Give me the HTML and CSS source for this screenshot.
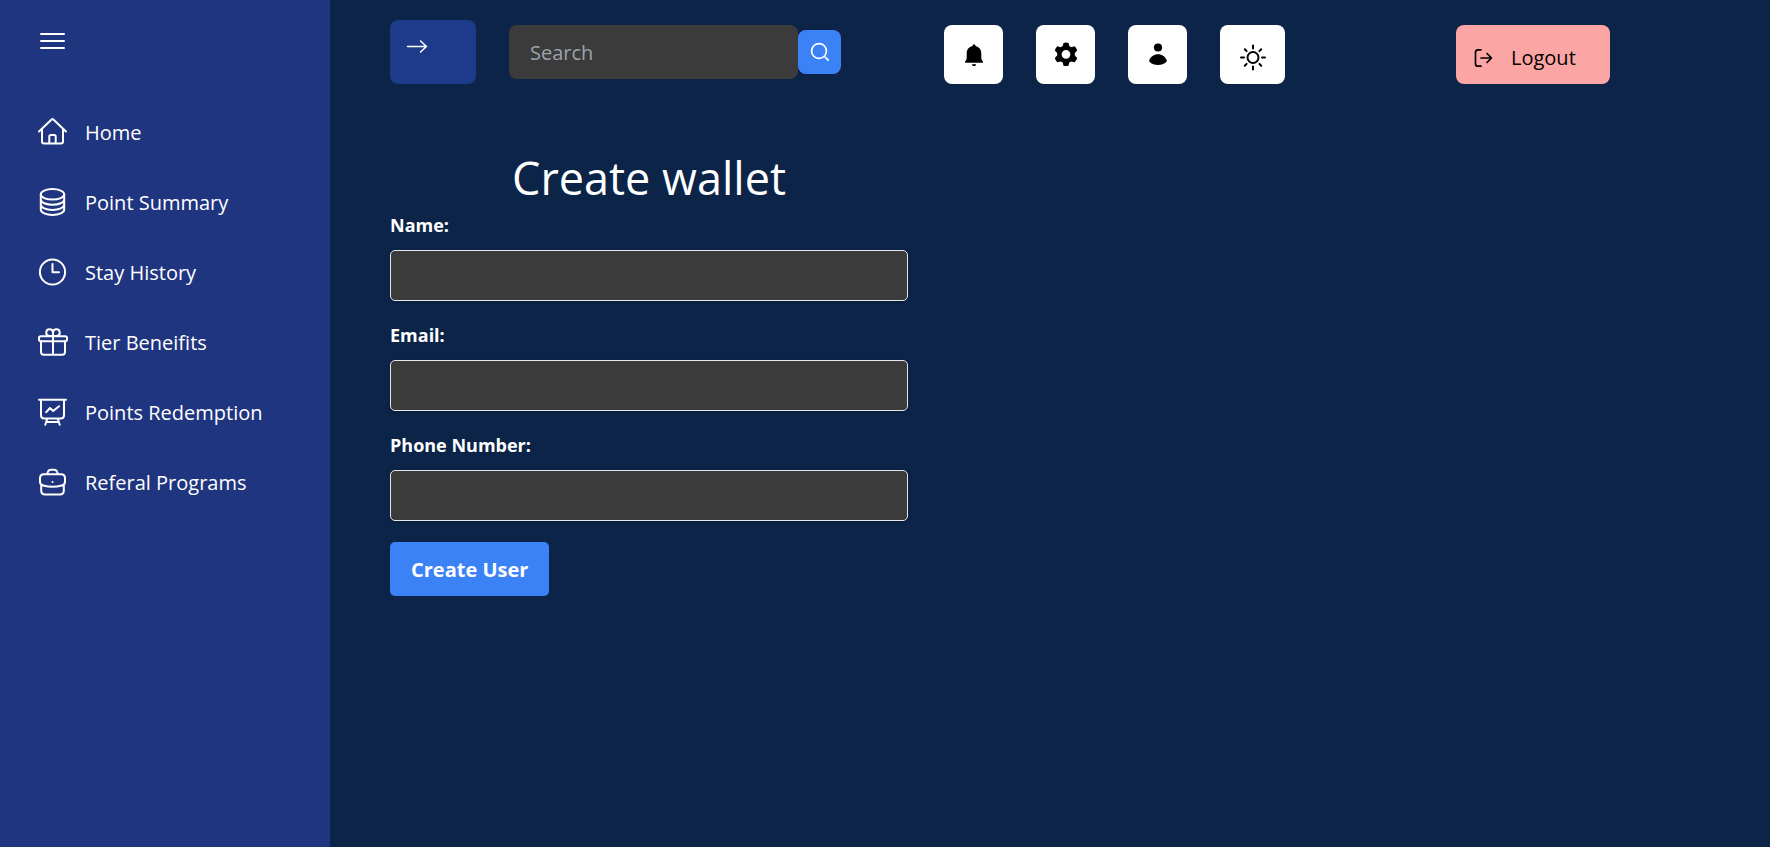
FILE: index.html
```html
<!DOCTYPE html>
<html lang="en">
<head>
<meta charset="utf-8">
<title>Create wallet</title>
<link rel="stylesheet" href="styles.css">
</head>
<body class="page">
<aside class="sidebar">
  <button class="menu-toggle" type="button" aria-label="Toggle menu">
    <svg class="icon" viewBox="0 0 34 34"><path d="M5 9H28M5 16H28M5 23H28"/></svg>
  </button>
  <nav class="nav">
    <a class="nav-link" href="#"><svg class="icon" viewBox="0 0 34 34"><path d="M3 16.500 15.600 4.500q.9-.8 1.800 0L30 16.500M6 14V26.500q0 2 2 2H25q2 0 2-2V14M13.300 28.500V21.500q0-1.500 1.500-1.500h3.400q1.500 0 1.500 1.500V28.500"/></svg>Home</a>
    <a class="nav-link" href="#"><svg class="icon" viewBox="0 0 34 34"><ellipse cx="16.500" cy="9.300" rx="11.700" ry="5.300"/><path d="M4.800 9.300V24.500c0 3 5.200 5.400 11.700 5.400S28.200 27.500 28.200 24.500V9.300M4.800 14.400c0 3 5.200 5.400 11.700 5.400s11.700-2.400 11.700-5.400M4.800 19.500c0 3 5.200 5.400 11.700 5.400s11.700-2.400 11.700-5.400"/></svg>Point Summary</a>
    <a class="nav-link" href="#"><svg class="icon" viewBox="0 0 34 34"><circle cx="16.500" cy="17" r="12.600"/><path d="M16.500 9V17.300H23"/></svg>Stay History</a>
    <a class="nav-link" href="#"><svg class="icon" viewBox="0 0 34 34"><rect x="3" y="11.300" width="28" height="5" rx="1.800"/><path d="M5 16.300V27q0 2.700 2.700 2.700H26.300q2.700 0 2.700-2.700V16.300M17 11.300V29.700M17 11H13.200A3.400 3.400 0 1 1 17 7.300V11H20.800A3.400 3.400 0 1 0 17 7.300"/></svg>Tier Beneifits</a>
    <a class="nav-link" href="#"><svg class="icon" viewBox="0 0 34 34"><path d="M3 4.700H30M5 4.700V20.300q0 3.200 3.200 3.200H24.800q3.200 0 3.200-3.200V4.700M11.300 23.500 9.300 29.700M21.700 23.500 23.700 29.700M10.500 27H22.500M10.200 17.200 14 13 17.200 16 23 11.200"/></svg>Points Redemption</a>
    <a class="nav-link" href="#"><svg class="icon" viewBox="0 0 34 34"><path d="M11 9.300 11.800 7q.7-2.200 3-2.200h3.400q2.300 0 3 2.200L22 9.300M8 9.300H25q4 0 4 4V17c0 2-1.300 3-3.200 3.500-6 1.700-12.600 1.700-18.600 0C5.300 20 4 19 4 17V13.300q0-4 4-4M5.200 19.500V25.500q0 4 4 4H23.800q4 0 4-4V19.500M16.500 17V17.100"/></svg>Referal Programs</a>
  </nav>
</aside>
<main class="content">
  <header class="topbar">
    <button class="expand" type="button" aria-label="Next"><svg class="icon-small" viewBox="0 0 26 26"><path d="M3.500 12.500H22.500M16.500 7 22.500 12.500 16.500 18"/></svg></button>
    <form class="search">
      <input class="search-input" type="search" placeholder="Search" aria-label="Search">
      <button class="search-button" type="button" aria-label="Submit search"><svg class="icon-small" viewBox="0 0 26 26"><circle cx="12" cy="12" r="7.400"/><path d="M17.500 17.500 21.200 21.200"/></svg></button>
    </form>
    <div class="actions">
      <button class="action" type="button" aria-label="Notifications"><svg class="icon-solid" viewBox="0 0 28 28"><path d="M14 3.300q1.500 0 1.500 1.800c3.500.8 5.800 3.600 5.800 7.200v4.200c0 2.200.7 3.100 1.600 3.700v1.600H5.100v-1.600c.9-.6 1.600-1.500 1.600-3.700v-4.200c0-3.600 2.300-6.400 5.800-7.200q0-1.800 1.500-1.800ZM11.700 23.200h4.600q-.6 2-2.300 2t-2.300-2Z"/></svg></button>
      <button class="action" type="button" aria-label="Settings"><svg class="icon-solid" viewBox="0 0 28 28"><path fill-rule="evenodd" d="M11.500 1.900q2.500-.8 5 0l.8 3.200 1.900 1.100 3.500-.9q1.800 1.700 2.500 4.300l-2.400 2.500v2.400l2.400 2.500q-.7 2.600-2.500 4.300l-3.500-.9-1.900 1.100-.8 3.200q-2.500.8-5 0l-.8-3.200-1.900-1.100-3.500.9q-1.800-1.700-2.500-4.300l2.400-2.500v-2.400L2.800 9.600q.7-2.600 2.500-4.300l3.500.9 1.900-1.100ZM14 8.900a4.400 4.400 0 1 0 0 8.800A4.400 4.400 0 1 0 14 8.900Z"/></svg></button>
      <button class="action" type="button" aria-label="Profile"><svg class="icon-solid" viewBox="0 0 28 28"><circle cx="14" cy="6.500" r="4.100"/><path d="M5.200 19.500C6.500 15.800 10 13.300 14 13.300s7.500 2.500 8.800 6.200c.3 1.100-2.800 4.500-8.800 4.500s-9.100-3.400-8.800-4.500Z"/></svg></button>
      <button class="action action-wide" type="button" aria-label="Theme"><svg class="icon" viewBox="0 0 34 34"><circle cx="17" cy="16.500" r="5.500"/><path d="M17 4.500v3M17 25.500v3M5 16.500h3M26 16.500h3M8.800 8.300l1.800 1.800M23.400 22.900l1.800 1.800M8.800 24.700l1.800-1.800M23.400 10.100l1.800-1.800"/></svg></button>
    </div>
    <button class="logout" type="button"><svg class="icon-small" viewBox="0 0 26 26"><path d="M11 4.800H8Q5.500 4.800 5.500 7.300V18.700q0 2.500 2.500 2.500H11M11 13H21.500M17 8.500 21.500 13 17 17.500"/></svg>Logout</button>
  </header>
  <form class="wallet-form">
    <h1 class="title">Create wallet</h1>
    <label class="label" for="name">Name:</label>
    <input class="field" id="name" type="text">
    <label class="label" for="email">Email:</label>
    <input class="field" id="email" type="email">
    <label class="label" for="phone">Phone Number:</label>
    <input class="field" id="phone" type="tel">
    <button class="submit" type="button">Create User</button>
  </form>
</main>
</body>
</html>
```
FILE: styles.css
```css
* {
  box-sizing: border-box;
}

.page {
  display: flex;
  min-height: 100vh;
  margin: 0;
  background: #0b2447;
  color: #fff;
  font-family: "Segoe UI", "Open Sans", "Noto Sans", sans-serif;
  font-size: 20px;
}

button,
input {
  margin: 0;
  border: 0;
  font: inherit;
}

button {
  cursor: pointer;
}

.icon,
.icon-small {
  flex: none;
  width: 34px;
  height: 34px;
  fill: none;
  stroke: currentColor;
  stroke-width: 2;
  stroke-linecap: round;
  stroke-linejoin: round;
}

.icon-small {
  width: 26px;
  height: 26px;
}

.icon-solid {
  width: 28px;
  height: 28px;
  fill: currentColor;
}

.sidebar {
  flex: none;
  width: 330px;
  padding: 25px 36px;
  background: #1f357f;
}

.menu-toggle {
  display: block;
  padding: 0;
  background: none;
  color: inherit;
}

.menu-toggle .icon {
  display: block;
}

.nav {
  display: flex;
  flex-direction: column;
  gap: 36px;
  margin-top: 56px;
}

.nav-link {
  display: flex;
  align-items: center;
  gap: 15px;
  height: 34px;
  color: inherit;
  text-decoration: none;
  white-space: nowrap;
}

.content {
  flex: 1;
  padding: 20px 160px 20px 60px;
}

.topbar {
  display: flex;
  align-items: flex-start;
}

.expand {
  display: flex;
  width: 86px;
  height: 64px;
  padding: 14px;
  border-radius: 8px;
  background: #1e3a8a;
  color: #fff;
}

.expand .icon-small {
  stroke-width: 1.500;
}

.search {
  display: flex;
  align-items: center;
  margin: 5px 0 0 33px;
}

.search-input {
  width: 289px;
  height: 54px;
  padding: 0 21px;
  border-radius: 8px;
  background: #3b3b3b;
  color: #fff;
}

.search-input::placeholder {
  color: #9ca3af;
}

.search-button {
  display: grid;
  place-items: center;
  width: 43px;
  height: 44px;
  padding: 0;
  border-radius: 8px;
  background: #3b82f6;
  color: #fff;
}

.search-button .icon-small,
.logout .icon-small {
  stroke-width: 1.700;
}

.actions {
  display: flex;
  gap: 33px;
  margin: 5px 0 0 103px;
}

.action {
  display: grid;
  place-items: center;
  width: 59px;
  height: 59px;
  padding: 0;
  border-radius: 8px;
  background: #fff;
  color: #000;
}

.action-wide {
  width: 65px;
  padding-top: 6px;
}

.logout {
  display: flex;
  align-items: center;
  gap: 15px;
  width: 154px;
  height: 59px;
  margin: 5px 0 0 auto;
  padding: 6px 0 0 14px;
  border-radius: 8px;
  background: #fca5a5;
  color: #000;
}

.wallet-form {
  display: flex;
  flex-direction: column;
  width: 518px;
  margin-top: 62px;
}

.title {
  margin: 0;
  font-size: 45px;
  font-weight: 400;
  line-height: 64px;
  text-align: center;
}

.label {
  margin-bottom: 9px;
  font-size: 18px;
  font-weight: 700;
  line-height: 31px;
}

.field {
  height: 51px;
  margin-bottom: 19px;
  padding: 0 16px;
  border: 1px solid #e5e7eb;
  border-radius: 5px;
  background: #3b3b3b;
  box-shadow: 0 1px 3px rgba(0, 0, 0, 0.2);
  color: #fff;
}

.submit {
  align-self: flex-start;
  height: 54px;
  margin-top: 2px;
  padding: 0 21px;
  border-radius: 5px;
  background: #3b82f6;
  color: #fff;
  font-weight: 700;
}
```
